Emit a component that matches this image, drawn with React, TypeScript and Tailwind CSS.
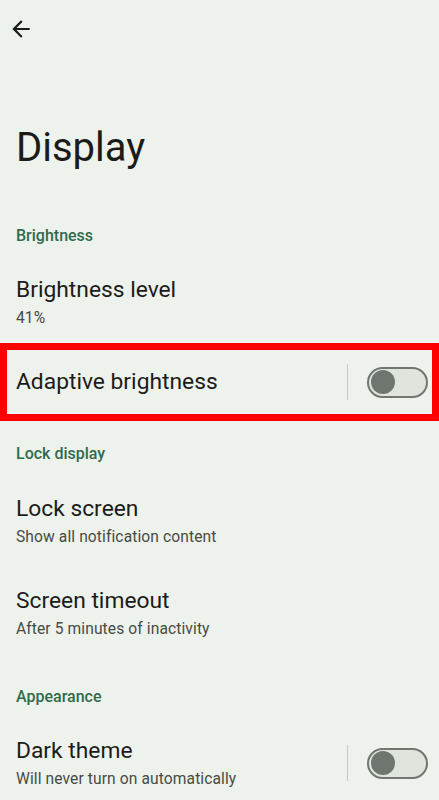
import * as React from 'react';

const font = { fontFamily: 'Roboto, "Noto Sans", sans-serif' };

const Toggle: React.FC = () => (
  <div className="flex items-center h-full">
    <div className="w-px h-[36px] bg-[#c4c8c0]" />
    <div className="ml-[19px] w-[61px] h-[31px] rounded-full border-[2.5px] border-[#70776f] bg-[#dfe4dc] flex items-center pl-[2px]">
      <div className="w-[24px] h-[24px] rounded-full bg-[#6f766f]" />
    </div>
  </div>
);

const SectionHeader: React.FC<{ label: string; className?: string }> = ({ label, className }) => (
  <div className={`px-4 h-[20px] leading-[20px] text-[16px] font-medium text-[#2e6b4d] ${className ?? ''}`}>{label}</div>
);

const Item: React.FC<{ title: string; subtitle?: string; className?: string }> = ({ title, subtitle, className }) => (
  <div className={`px-4 ${className ?? ''}`}>
    <div className="h-[28px] leading-[28px] text-[22.8px] text-[#1b1c1a]">{title}</div>
    {subtitle && (
      <div className="mt-[4px] h-[20px] leading-[20px] text-[15.6px] tracking-[0.1px] text-[#474b45]">{subtitle}</div>
    )}
  </div>
);

export default function App() {
  return (
    <div className="w-[439px] h-[800px] bg-[#eef2ec] overflow-hidden" style={font}>
      {/* Top bar */}
      <div className="h-[58px] flex items-center pl-[8px]">
        <svg width="26" height="26" viewBox="0 0 24 24" fill="#1b1c1a">
          <path d="M20 11H7.83l5.59-5.59L12 4l-8 8 8 8 1.41-1.41L7.83 13H20v-2z" />
        </svg>
      </div>

      <div className="mt-[69px] px-4 h-[42px] leading-[42px] text-[40px] text-[#1b1c1a]">Display</div>

      <SectionHeader label="Brightness" className="mt-[57px]" />
      <Item title="Brightness level" subtitle="41%" className="mt-[30px]" />

      {/* Adaptive brightness row (highlighted) */}
      <div className="relative mt-[15px] h-[78px] flex items-center justify-between pl-4 pr-[11px]">
        <div className="text-[22.8px] leading-[28px] text-[#1b1c1a]">Adaptive brightness</div>
        <Toggle />
        <div className="absolute inset-0 border-[7px] border-[#ff0000] pointer-events-none" />
      </div>

      <SectionHeader label="Lock display" className="mt-[23px]" />
      <Item title="Lock screen" subtitle="Show all notification content" className="mt-[31px]" />
      <Item title="Screen timeout" subtitle="After 5 minutes of inactivity" className="mt-[40px]" />

      <SectionHeader label="Appearance" className="mt-[48px]" />
      <div className="mt-[30px] flex items-center justify-between pr-[11px]">
        <Item title="Dark theme" subtitle="Will never turn on automatically" />
        <Toggle />
      </div>
    </div>
  );
}
